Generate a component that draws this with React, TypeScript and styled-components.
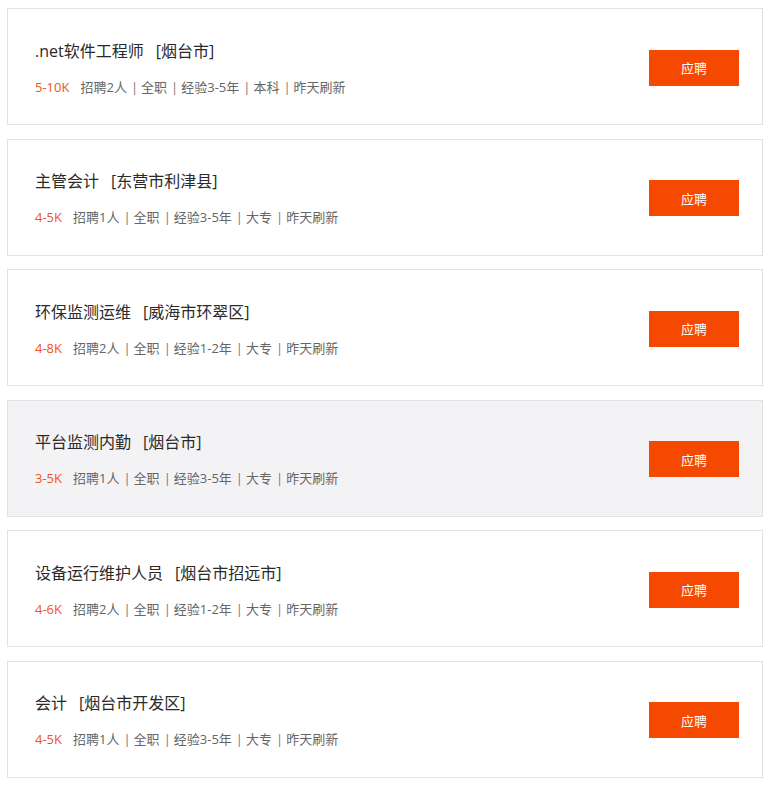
import React from "react";
import styled, { createGlobalStyle } from "styled-components";

const Global = createGlobalStyle`
  html, body { margin: 0; padding: 0; background: #ffffff; }
  body {
    font-family: "Open Sans", "Noto Sans CJK SC", "Noto Sans", sans-serif;
    -webkit-font-smoothing: antialiased;
  }
`;

const List = styled.div`
  display: flex;
  flex-direction: column;
  gap: 13.6px;
  padding: 8px 8px 0 7px;
`;

const Card = styled.div<{ $active?: boolean }>`
  box-sizing: border-box;
  height: 117px;
  display: flex;
  align-items: center;
  justify-content: space-between;
  padding: 0 23px 0 27px;
  border: 1px solid #e2e2e2;
  background: ${(p) => (p.$active ? "#f3f3f5" : "#ffffff")};
`;

const Info = styled.div`
  display: flex;
  flex-direction: column;
  gap: 12px;
`;

const Title = styled.div`
  font-size: 16px;
  line-height: 28px;
  color: #2a2a2a;
  white-space: nowrap;
`;

const Place = styled.span`
  margin-left: 12px;
`;

const Meta = styled.div`
  display: flex;
  align-items: center;
  font-size: 13px;
  line-height: 20px;
  color: #666666;
  white-space: nowrap;
`;

const Salary = styled.span`
  color: #f4511e;
  margin-right: 11px;
`;

const Item = styled.span<{ $first?: boolean }>`
  margin-left: ${(p) => (p.$first ? "0" : "4px")};
`;

const Pipe = styled.span`
  margin-right: 3px;
  color: #777777;
`;

const ApplyButton = styled.button`
  width: 90px;
  height: 36px;
  margin-top: 2px;
  border: none;
  background: #f54800;
  color: #ffffff;
  font-family: "Open Sans", "Noto Sans CJK SC", sans-serif;
  font-size: 13px;
  cursor: pointer;
  padding: 0;
`;

type Job = {
  title: string;
  place: string;
  salary: string;
  tags: string[];
  active?: boolean;
};

const jobs: Job[] = [
  { title: ".net软件工程师", place: "[烟台市]", salary: "5-10K", tags: ["招聘2人", "全职", "经验3-5年", "本科", "昨天刷新"] },
  { title: "主管会计", place: "[东营市利津县]", salary: "4-5K", tags: ["招聘1人", "全职", "经验3-5年", "大专", "昨天刷新"] },
  { title: "环保监测运维", place: "[威海市环翠区]", salary: "4-8K", tags: ["招聘2人", "全职", "经验1-2年", "大专", "昨天刷新"] },
  { title: "平台监测内勤", place: "[烟台市]", salary: "3-5K", tags: ["招聘1人", "全职", "经验3-5年", "大专", "昨天刷新"], active: true },
  { title: "设备运行维护人员", place: "[烟台市招远市]", salary: "4-6K", tags: ["招聘2人", "全职", "经验1-2年", "大专", "昨天刷新"] },
  { title: "会计", place: "[烟台市开发区]", salary: "4-5K", tags: ["招聘1人", "全职", "经验3-5年", "大专", "昨天刷新"] },
];

export default function App() {
  return (
    <>
      <Global />
      <List>
        {jobs.map((job, i) => (
          <Card key={i} $active={job.active}>
            <Info>
              <Title>
                {job.title}
                <Place>{job.place}</Place>
              </Title>
              <Meta>
                <Salary>{job.salary}</Salary>
                {job.tags.map((t, j) => (
                  <Item key={j} $first={j === 0}>
                    {j > 0 && <Pipe>|</Pipe>}
                    {t}
                  </Item>
                ))}
              </Meta>
            </Info>
            <ApplyButton>应聘</ApplyButton>
          </Card>
        ))}
      </List>
    </>
  );
}
